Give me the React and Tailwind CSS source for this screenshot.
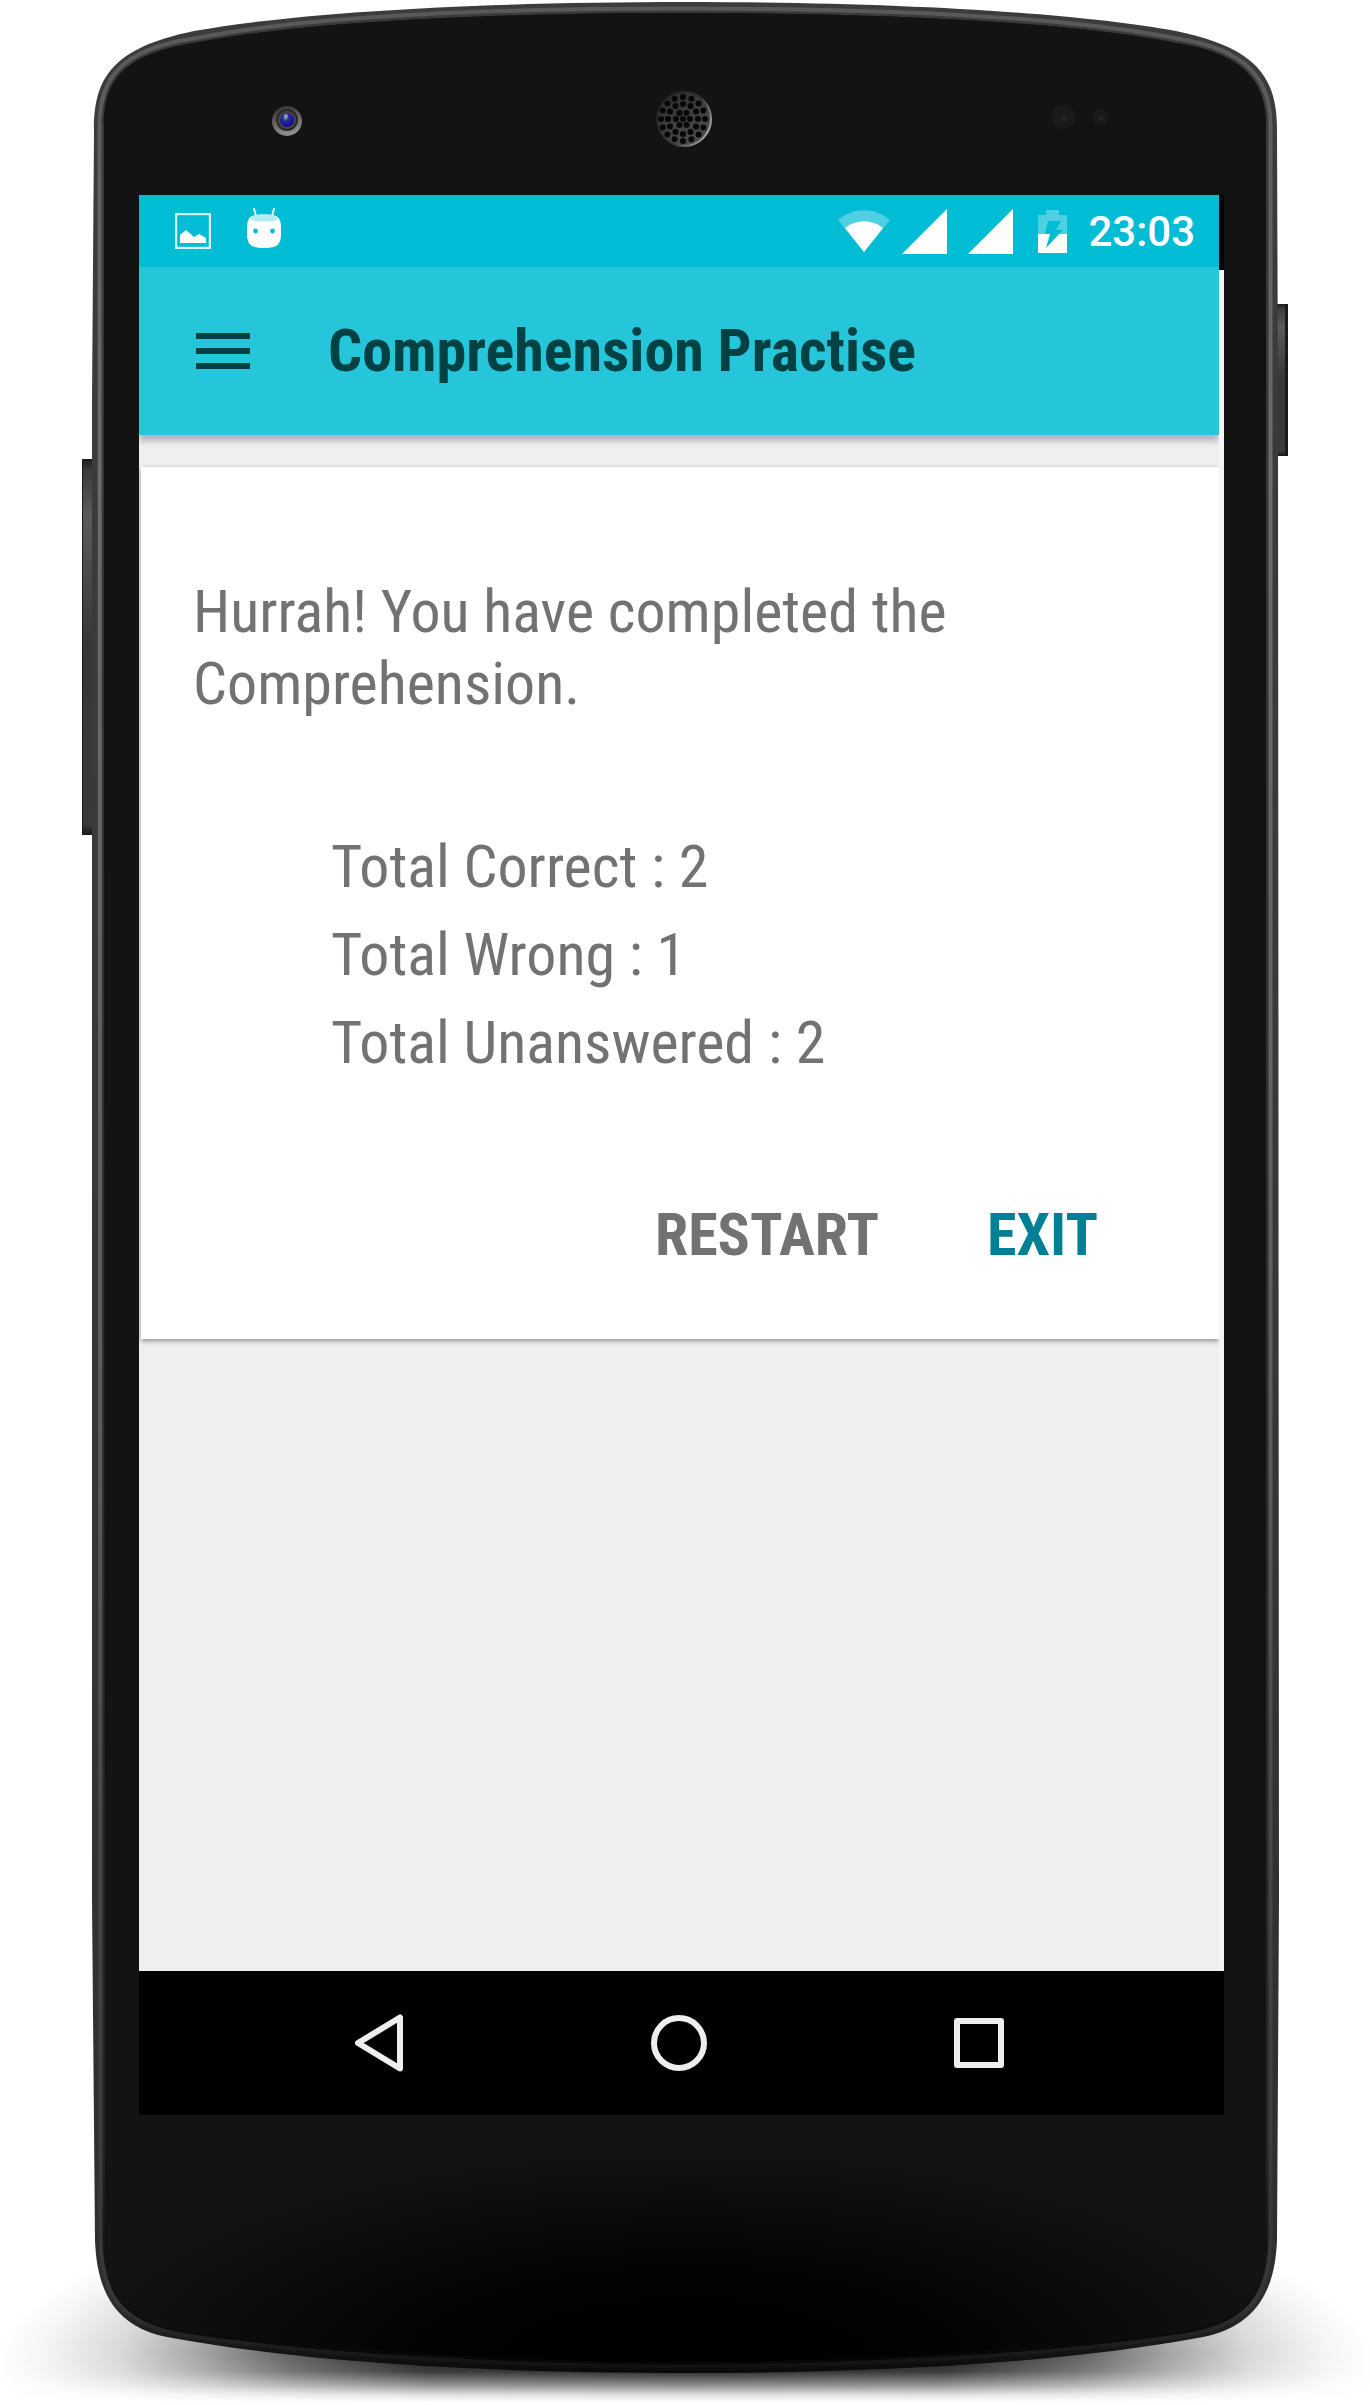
const OUTER =
  "M94 130C94 78 112 48 194 31C300 12 480 2 685 2C890 2 1070 12 1176 31C1258 48 1277 78 1277 130L1278 400L1279 1900L1277 2240C1275 2300 1248 2328 1203 2337C1070 2362 890 2373 685 2373C480 2373 300 2362 167 2337C122 2328 97 2300 95 2240L92 1900L92 400Z";
const INNER =
  "M104 125C104 82 122 54 194 43C300 22 480 13 685 13C890 13 1070 22 1176 43C1248 54 1266 85 1266 125L1266 2240C1265 2295 1245 2325 1170 2333C1050 2350 870 2362 685 2362C500 2362 320 2350 200 2333C125 2325 106 2295 105 2240Z";

const RINGS = [
  { count: 1, radius: 0 },
  { count: 6, radius: 7 },
  { count: 12, radius: 15 },
  { count: 16, radius: 22 },
];

const HOLES = RINGS.flatMap(({ count, radius }) =>
  Array.from({ length: count }, (_, i) => {
    const offset = count === 6 ? Math.PI / 6 : 0;
    const angle = (i / count) * Math.PI * 2 + offset - Math.PI / 2;
    return { x: 683 + Math.cos(angle) * radius, y: 119 + Math.sin(angle) * radius };
  })
);

function PhoneBody() {
  return (
    <svg
      aria-hidden="true"
      className="absolute inset-0 h-full w-full"
      viewBox="0 0 1370 2405"
      preserveAspectRatio="none"
    >
      <defs>
        <radialGradient id="ground" gradientUnits="userSpaceOnUse" cx="0" cy="0" r="1" gradientTransform="translate(685 2365) scale(690 190)">
          <stop offset="0" stopColor="#000" stopOpacity="0.95" />
          <stop offset="0.38" stopColor="#000" stopOpacity="0.88" />
          <stop offset="0.57" stopColor="#000" stopOpacity="0.62" />
          <stop offset="0.71" stopColor="#000" stopOpacity="0.34" />
          <stop offset="0.82" stopColor="#000" stopOpacity="0.15" />
          <stop offset="0.93" stopColor="#000" stopOpacity="0.04" />
          <stop offset="1" stopColor="#000" stopOpacity="0" />
        </radialGradient>
        <linearGradient id="fade" gradientUnits="userSpaceOnUse" x1="0" y1="2355" x2="0" y2="2402">
          <stop offset="0" stopColor="#fff" />
          <stop offset="0.35" stopColor="#ddd" />
          <stop offset="0.65" stopColor="#777" />
          <stop offset="0.85" stopColor="#222" />
          <stop offset="1" stopColor="#000" />
        </linearGradient>
        <mask id="fadeMask" maskUnits="userSpaceOnUse" x="0" y="2150" width="1370" height="255">
          <rect x="0" y="2150" width="1370" height="255" fill="url(#fade)" />
        </mask>
        <linearGradient id="rim" gradientUnits="userSpaceOnUse" x1="0" y1="0" x2="0" y2="2375">
          <stop offset="0" stopColor="#3c3c3d" />
          <stop offset="0.5" stopColor="#38383a" />
          <stop offset="0.97" stopColor="#2e2e2e" />
          <stop offset="1" stopColor="#080808" />
        </linearGradient>
        <linearGradient id="rimLight" gradientUnits="userSpaceOnUse" x1="0" y1="0" x2="0" y2="2375">
          <stop offset="0" stopColor="#58585b" />
          <stop offset="0.2" stopColor="#6c6b70" />
          <stop offset="0.6" stopColor="#5c5c60" />
          <stop offset="0.8" stopColor="#444446" />
          <stop offset="0.97" stopColor="#363637" />
          <stop offset="1" stopColor="#0c0c0c" />
        </linearGradient>
        <linearGradient id="rimDark" gradientUnits="userSpaceOnUse" x1="0" y1="0" x2="0" y2="2375">
          <stop offset="0" stopColor="#3a3a3b" />
          <stop offset="0.9" stopColor="#262627" />
          <stop offset="1" stopColor="#050505" />
        </linearGradient>
        <radialGradient id="glass" gradientUnits="userSpaceOnUse" cx="0" cy="0" r="1" gradientTransform="translate(685 2365) scale(620 220)">
          <stop offset="0" stopColor="#000" />
          <stop offset="0.4" stopColor="#020202" />
          <stop offset="1" stopColor="#131313" />
        </radialGradient>
        <linearGradient id="key" x1="0" y1="0" x2="0" y2="1">
          <stop offset="0" stopColor="#1c1c1c" />
          <stop offset="0.03" stopColor="#3c3c3c" />
          <stop offset="0.15" stopColor="#5a5a5a" />
          <stop offset="0.5" stopColor="#363636" />
          <stop offset="0.97" stopColor="#3a3a3a" />
          <stop offset="1" stopColor="#181818" />
        </linearGradient>
        <linearGradient id="lensRing" x1="0" y1="0" x2="0.3" y2="1">
          <stop offset="0" stopColor="#2a2828" />
          <stop offset="0.5" stopColor="#625e5d" />
          <stop offset="1" stopColor="#8f8d8c" />
        </linearGradient>
        <radialGradient id="lens" cx="0.4" cy="0.35" r="0.7">
          <stop offset="0" stopColor="#8295a8" />
          <stop offset="0.3" stopColor="#2b3380" />
          <stop offset="0.75" stopColor="#1410b0" />
          <stop offset="1" stopColor="#0a0850" />
        </radialGradient>
        <linearGradient id="speaker" x1="0" y1="0" x2="0.6" y2="1">
          <stop offset="0" stopColor="#2a2a2a" />
          <stop offset="1" stopColor="#4c4c4c" />
        </linearGradient>
        <linearGradient id="speakerRim" x1="0" y1="0" x2="1" y2="0.6">
          <stop offset="0" stopColor="#1b1b1b" />
          <stop offset="0.65" stopColor="#333" />
          <stop offset="1" stopColor="#a0a0a0" />
        </linearGradient>
      </defs>

      <rect x="0" y="2150" width="1370" height="255" fill="url(#ground)" mask="url(#fadeMask)" />

      <rect x="82" y="459" width="14" height="376" rx="1" fill="url(#key)" />
      <rect x="82" y="459" width="1" height="376" fill="#1a1a1a" />
      <rect x="1274" y="304" width="14" height="152" rx="1" fill="url(#key)" />
      <rect x="1285" y="304" width="3" height="152" fill="#1a1a1a" />

      <path d={OUTER} fill="url(#rim)" />
      <path d={INNER} fill="none" stroke="url(#rimLight)" strokeWidth="13" />
      <path d={INNER} fill="none" stroke="url(#rimDark)" strokeWidth="5" />
      <path d={INNER} fill="#131313" />
      <path d={INNER} fill="url(#glass)" />

      <circle cx="287" cy="121" r="15" fill="url(#lensRing)" />
      <circle cx="287" cy="120" r="11" fill="#2b2828" />
      <circle cx="287" cy="120" r="9" fill="#4a4646" />
      <circle cx="287" cy="120" r="7" fill="url(#lens)" />
      <circle cx="286" cy="116" r="2" fill="#9fb0bd" opacity="0.8" />

      <circle cx="684" cy="119" r="27" fill="url(#speaker)" stroke="url(#speakerRim)" strokeWidth="2" />
      {HOLES.map((hole, i) => (
        <circle key={i} cx={hole.x} cy={hole.y} r="3" fill="#070707" />
      ))}

      <circle cx="1063" cy="117" r="12" fill="#1b1919" />
      <circle cx="1064" cy="119" r="2" fill="#3a2018" />
      <circle cx="1101" cy="117" r="8" fill="#1b1919" />
      <circle cx="1101" cy="118" r="2" fill="#3a2018" />
    </svg>
  );
}

function PictureIcon() {
  return (
    <svg aria-hidden="true" className="h-9 w-9" viewBox="0 0 36 36">
      <rect x="1" y="1" width="34" height="34" fill="none" stroke="#d9f5f9" strokeWidth="2.4" />
      <path d="M5 22l6-5 8 7 5-3 7 4v5H5z" fill="#fff" />
    </svg>
  );
}

function RobotIcon() {
  return (
    <svg aria-hidden="true" className="h-10 w-[34px]" viewBox="0 0 34 40">
      <path d="M7 .8l2 7M27 .8l-2 7" stroke="#e3f8fa" strokeWidth="2" strokeLinecap="round" />
      <path d="M17 6.500C29 6.500 34 8 34 20v5c0 11-3 15-17 15S0 36 0 25v-5C0 8 5 6.500 17 6.500z" fill="#fff" />
      <path d="M3 11C6 7 11 6.500 17 6.500S28 7 31 11c-5 3-8 3-11 2-3 1-5 1-7 0-3 1-6 0-10-2z" fill="#b5ecf2" />
      <circle cx="8.500" cy="23" r="2.400" fill="#00bcd4" />
      <circle cx="25.500" cy="23" r="2.400" fill="#00bcd4" />
    </svg>
  );
}

function WifiIcon() {
  return (
    <svg aria-hidden="true" className="h-[42px] w-[52px]" viewBox="0 0 52 42">
      <path d="M26 42L0 10C15-3 37-3 52 10z" fill="#4dd0e1" />
      <path d="M26 42L7 18c11-9 27-9 38 0z" fill="#fff" />
    </svg>
  );
}

function SignalIcon() {
  return (
    <svg aria-hidden="true" className="h-[45px] w-[45px]" viewBox="0 0 45 45">
      <path d="M45 0v45H0z" fill="#fff" />
    </svg>
  );
}

function BatteryIcon() {
  return (
    <svg aria-hidden="true" className="h-[43px] w-[29px]" viewBox="0 0 29 43">
      <path d="M8 0h13v5h8v20H0V5h8z" fill="#4dd0e1" />
      <path d="M0 24h29v19H0z" fill="#fff" />
      <path d="M10 11h13l-5 9h7L8 38l4-14H7z" fill="#00bcd4" />
    </svg>
  );
}

const RESULTS = [
  ["Total Correct", 2],
  ["Total Wrong", 1],
  ["Total Unanswered", 2],
];

function StatusBar() {
  return (
    <div className="flex h-[72px] items-center bg-[#00bcd4] pr-6 pl-9">
      <div className="flex items-center gap-9">
        <PictureIcon />
        <div className="pb-1.5">
          <RobotIcon />
        </div>
      </div>
      <div className="ml-auto flex items-center gap-[21px]">
        <div className="flex items-center gap-3">
          <WifiIcon />
          <SignalIcon />
        </div>
        <SignalIcon />
        <div className="pl-1">
          <BatteryIcon />
        </div>
        <time className="pt-0.5 font-['Roboto',sans-serif] text-[42px] leading-[70px] font-medium text-white">23:03</time>
      </div>
    </div>
  );
}

function AppBar() {
  return (
    <header className="flex h-[168px] items-center bg-[#26c6da] pl-[57px] shadow-[0_6px_6px_rgba(0,0,0,0.25)]">
      <button type="button" aria-label="Open menu" className="flex w-[54px] flex-col gap-[9px]">
        <span className="h-1.5 w-full bg-[#004144]" />
        <span className="h-1.5 w-full bg-[#004144]" />
        <span className="h-1.5 w-full bg-[#004144]" />
      </button>
      <h1 className="ml-[78px] text-[60px] leading-[72px] font-bold whitespace-nowrap text-[#004144]">
        Comprehension Practise
      </h1>
    </header>
  );
}

function ResultCard() {
  return (
    <section className="mt-8 ml-0.5 bg-white px-[52px] pt-[109px] pb-[68px] text-[60px] leading-[72px] text-[#727272] shadow-[0_2px_5px_rgba(0,0,0,0.4)]">
      <p className="max-w-[900px]">Hurrah! You have completed the Comprehension.</p>
      <ul className="mt-[103px] pl-[138px] leading-[88px]">
        {RESULTS.map(([label, value]) => (
          <li key={label}>
            {label} : {value}
          </li>
        ))}
      </ul>
      <div className="mt-28 flex justify-end gap-[108px] pr-[69px] font-bold">
        <button type="button">RESTART</button>
        <button type="button" className="text-[#008094]">
          EXIT
        </button>
      </div>
    </section>
  );
}

function NavBar() {
  return (
    <nav className="grid h-36 grid-cols-3 items-center justify-items-center bg-black pr-[95px] pl-[90px]">
      <button type="button" aria-label="Back">
        <svg className="h-[58px] w-12" viewBox="0 0 48 58" fill="none" stroke="#eee" strokeWidth="6" strokeLinejoin="round">
          <path d="M45 3.500v51L3 29z" />
        </svg>
      </button>
      <button type="button" aria-label="Home">
        <svg className="h-14 w-14" viewBox="0 0 56 56" fill="none" stroke="#eee" strokeWidth="6">
          <circle cx="28" cy="28" r="25" />
        </svg>
      </button>
      <button type="button" aria-label="Recent apps">
        <svg className="h-[50px] w-[50px]" viewBox="0 0 50 50" fill="none" stroke="#eee" strokeWidth="6" strokeLinejoin="round">
          <rect x="3" y="3" width="44" height="44" />
        </svg>
      </button>
    </nav>
  );
}

export default function App() {
  return (
    <main className="relative grid min-h-screen grid-cols-[139fr_1085fr_146fr] grid-rows-[195fr_1920fr_290fr] overflow-hidden bg-white font-['Roboto_Condensed','Roboto',sans-serif]">
      <PhoneBody />
      <div className="relative col-start-2 row-start-2 flex flex-col">
        <div className="flex flex-1">
          <div className="min-w-0 flex-1 overflow-hidden bg-[#efefef]">
            <StatusBar />
            <AppBar />
            <ResultCard />
          </div>
          <div className="flex w-[5px] flex-col bg-[#f4f4f6]">
            <div className="h-[75px] bg-black" />
          </div>
        </div>
        <NavBar />
      </div>
    </main>
  );
}
